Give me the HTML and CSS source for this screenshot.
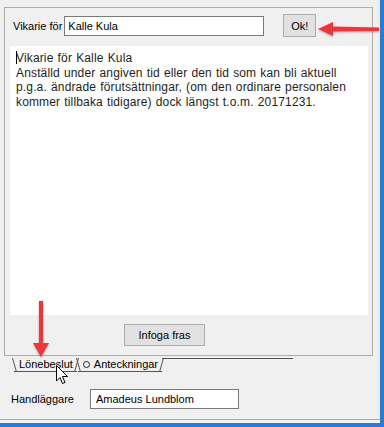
FILE: index.html
```html
<!DOCTYPE html>
<html lang="sv">
<head>
  <meta charset="UTF-8">
  <title>Vikarie</title>
  <link rel="stylesheet" href="styles.css">
</head>
<body>
  <div class="ram">
    <div class="innehall">
      <div class="panel">
        <div class="rad">
          <label for="vikarie">Vikarie för</label>
          <input type="text" id="vikarie" class="falt" value="Kalle Kula">
          <button class="knapp ok">Ok!</button>
        </div>

        <div class="text"><span class="markor"></span>Vikarie för Kalle Kula<br>Anställd under angiven tid eller den tid som kan bli aktuell<br>p.g.a. ändrade förutsättningar, (om den ordinare personalen<br>kommer tillbaka tidigare) dock längst t.o.m. 20171231.</div>

        <button class="knapp infoga">Infoga fras</button>
      </div>

      <div class="flikar">
        <span class="flik vald">Lönebeslut</span>
        <span class="flik"><span class="ring"></span>Anteckningar</span>
        <span class="linje"></span>
      </div>

      <div class="rad handl">
        <label for="handl">Handläggare</label>
        <input type="text" id="handl" class="falt" value="Amadeus Lundblom">
      </div>
    </div>

    <!-- pilar och muspekare ovanpå -->
    <svg class="pil pil-ok" width="62" height="16" viewBox="0 0 62 16">
      <polygon points="0,8 15,1 15,15" fill="#e8383d"/>
      <polygon points="13,5.5 61,6.5 61,10 13,10.5" fill="#e8383d"/>
    </svg>
    <svg class="pil pil-ned" width="16" height="58" viewBox="0 0 16 58">
      <polygon points="6,1 10,1 10,45 6,45" fill="#e8383d"/>
      <polygon points="0,43 16,43 8,57" fill="#e8383d"/>
    </svg>
    <svg class="pekare" width="13" height="20" viewBox="0 0 13 20">
      <path d="M0.5,0.5 L0.5,16 L4,12.5 L6.5,18.5 L9,17.5 L6.5,11.5 L11.5,11.5 Z" fill="#fff" stroke="#000" stroke-width="1"/>
    </svg>
  </div>
</body>
</html>
```

FILE: styles.css
```css
html, body {
  margin: 0;
  padding: 0;
}

body {
  background-color: #f0f0f0;
  font-family: 'Liberation Sans', Arial, sans-serif;
  font-size: 11px;
  color: #000;
}

.ram {
  position: relative;
  width: 384px;
  height: 427px;
  box-sizing: border-box;
  border-right: 4px solid #2b7bd0;
  border-bottom: 4px solid #2b7bd0;
  overflow: hidden;
}

.innehall {
  height: 420px;
  box-sizing: border-box;
  border-bottom: 1px solid #a8a8a8;
  border-right: 1px solid #f6e6da;
  padding: 7px 0 0 4px;
}

.panel {
  width: 369px;
  height: 349px;
  box-sizing: border-box;
  border: 1px solid #b3aca6;
  padding-top: 6px;
}

.rad {
  display: flex;
  align-items: center;
  padding-left: 8px;
}

.rad label {
  margin-right: 2px;
}

.falt {
  box-sizing: border-box;
  width: 200px;
  height: 20px;
  margin: 0;
  padding: 0 0 0 3px;
  border: 1px solid #7a7a7a;
  background-color: #fff;
  font-family: 'Liberation Sans', Arial, sans-serif;
  font-size: 11px;
  color: #000;
  outline: none;
}

.knapp {
  box-sizing: border-box;
  margin: 0;
  padding: 0;
  background-color: #e1e1e1;
  border: 1px solid #adadad;
  font-family: 'Liberation Sans', Arial, sans-serif;
  font-size: 11px;
  color: #000;
}

.ok {
  width: 33px;
  height: 23px;
  margin-left: 19px;
}

.text {
  box-sizing: border-box;
  width: 358px;
  height: 269px;
  margin: 9px 0 0 5px;
  padding: 5px 6px;
  background-color: #fff;
  font-size: 12px;
  line-height: 14.6px;
  letter-spacing: 0.15px;
  word-spacing: 0.6px;
  white-space: nowrap;
  color: #1e1e1e;
}

.markor {
  display: inline-block;
  width: 1px;
  height: 13px;
  margin-right: -1px;
  vertical-align: -2px;
  background-color: #000;
}

.infoga {
  display: block;
  width: 81px;
  height: 22px;
  margin: 9px 0 0 119px;
}

.flikar {
  display: flex;
  width: 289px;
  height: 16px;
  margin-top: 1px;
  padding-left: 10px;
  box-sizing: border-box;
}

.flik {
  position: relative;
  display: flex;
  align-items: center;
  height: 13px;
  margin-top: 1px;
  padding: 0 4px 0 5px;
  border-bottom: 1px solid #555;
  line-height: 13px;
}

.flik::before,
.flik::after {
  content: "";
  position: absolute;
  top: 0;
  bottom: -1px;
  width: 1px;
  background-color: #555;
}

.flik::before {
  left: 0;
  transform: skewX(16deg);
}

.flik::after {
  right: 0;
  transform: skewX(-16deg);
}

.flik + .flik {
  margin-left: 1px;
}

.ring {
  display: inline-block;
  width: 5px;
  height: 5px;
  border: 1px solid #222;
  border-radius: 50%;
  margin-right: 4px;
}

.linje {
  flex: 1;
  height: 0;
  margin-top: 1px;
  border-top: 1px solid #555;
}

.handl {
  margin-top: 16px;
  padding-left: 7px;
}

.handl label {
  margin-right: 16px;
}

.handl .falt {
  width: 149px;
  padding-left: 5px;
}

.pil {
  position: absolute;
  filter: drop-shadow(0 1px 1px rgba(120, 0, 0, 0.35));
}

.pil-ok {
  left: 318px;
  top: 21px;
}

.pil-ned {
  left: 33px;
  top: 300px;
}

.pekare {
  position: absolute;
  left: 56px;
  top: 365px;
}
```
